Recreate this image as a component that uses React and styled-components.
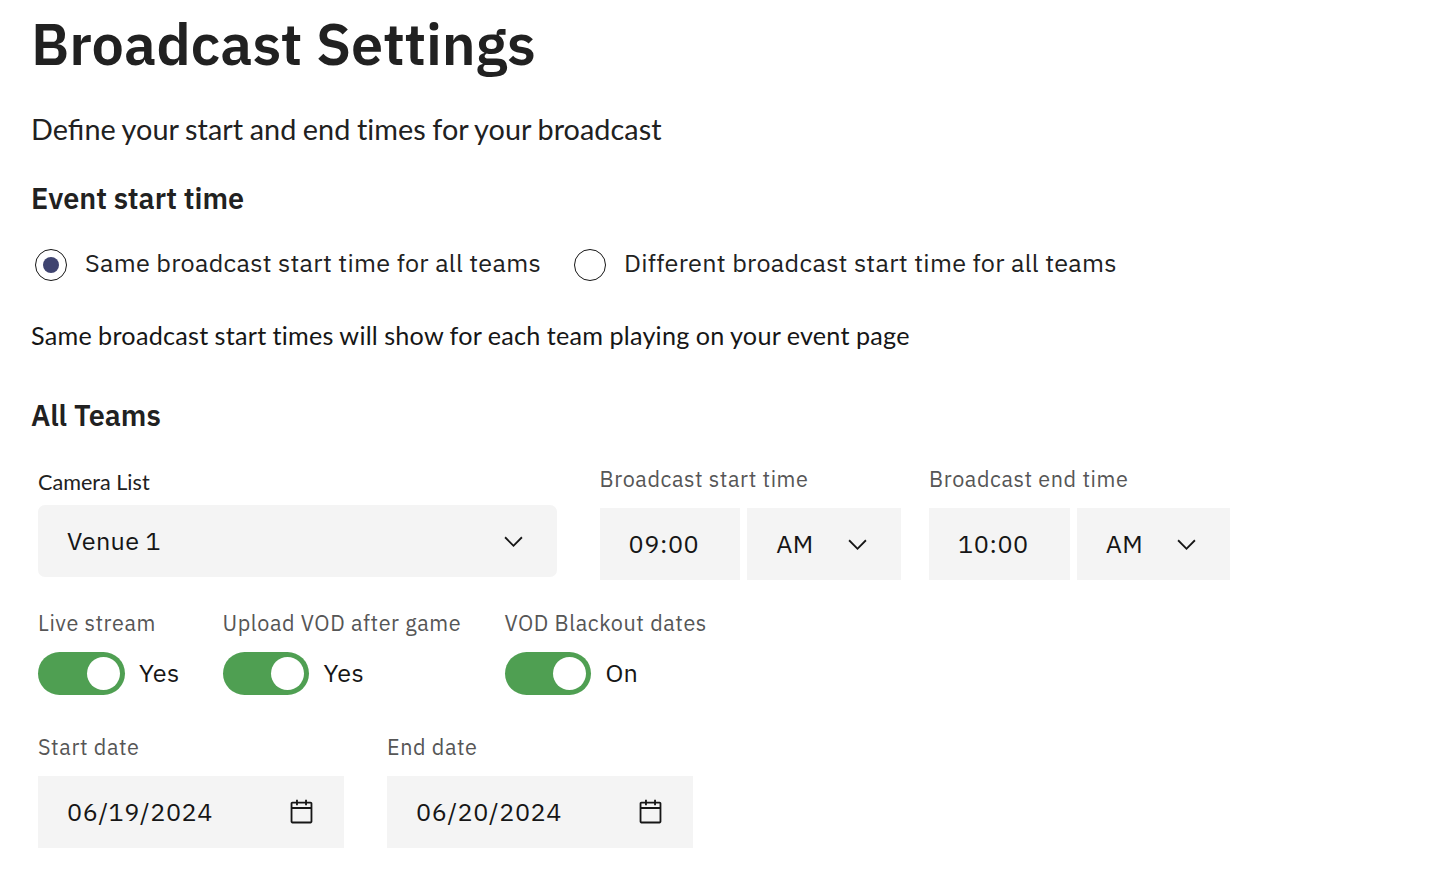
import React from "react";
import styled, { createGlobalStyle } from "styled-components";

const GlobalStyle = createGlobalStyle`
  *, *::before, *::after { box-sizing: border-box; }
  body { margin: 0; background: #fff; color: #161616; }
`;

const sans = `"IBM Plex Sans", Roboto, "Liberation Sans", sans-serif`;
const lato = `Lato, "Open Sans", sans-serif`;

const Page = styled.main`
  display: flex;
  flex-direction: column;
  padding: 8px 31px 30px;
  min-height: 878px;
  background: #fff;
  font-family: ${sans};
  white-space: nowrap;
`;

const Title = styled.h1`
  margin: 0;
  font-size: 57.6px;
  font-weight: 600;
  line-height: 72px;
  color: #212121;
`;

const Intro = styled.p`
  margin: 27px 0 0;
  font-family: ${lato};
  font-size: 28.8px;
  line-height: 44px;
  letter-spacing: 0.05px;
  word-spacing: -0.9px;
  color: #212121;
`;

const Ligated = styled.span`
  font-feature-settings: "liga" 1;
`;

const SectionTitle = styled.h2`
  margin: ${(p) => p.$gap}px 0 0;
  padding-bottom: 1px;
  font-size: 28.8px;
  font-weight: 600;
  line-height: 36px;
  color: #212121;
`;

const RadioGroup = styled.div`
  display: flex;
  margin: 30px 0 0 4px;
`;

const RadioOption = styled.label`
  display: flex;
  align-items: center;
  flex: none;
  width: 539px;
  height: 36px;
`;

const RadioDot = styled.span`
  display: flex;
  align-items: center;
  justify-content: center;
  flex: none;
  width: 32px;
  height: 32px;
  border: 1.5px solid #161616;
  border-radius: 50%;
  &::after {
    content: "";
    width: 16px;
    height: 16px;
    border-radius: 50%;
    background: ${(p) => (p.$checked ? "#3f4470" : "transparent")};
  }
`;

const RadioText = styled.span`
  padding: 0 0 4px 18px;
  font-size: 25.2px;
  line-height: 32px;
  letter-spacing: 0.288px;
  color: #212121;
`;

const Hint = styled.p`
  margin: 34px 0 0;
  font-family: ${lato};
  font-size: 25.2px;
  line-height: 36px;
  letter-spacing: 0.24px;
  word-spacing: -0.55px;
  color: #161616;
`;

const Row = styled.div`
  display: flex;
  align-items: flex-start;
  margin: ${(p) => p.$gap}px 0 0 7px;
`;

const Field = styled.div`
  display: flex;
  flex-direction: column;
  flex: none;
  width: ${(p) => p.$w}px;
  margin-right: ${(p) => p.$mr || 0}px;
`;

const Label = styled.label`
  margin-bottom: 14px;
  font-size: 21.6px;
  line-height: 30px;
  letter-spacing: 0.576px;
  color: #565656;
`;

const CameraLabel = styled.label`
  margin: 3px 0 8px;
  font-family: ${lato};
  font-size: 21.6px;
  line-height: 30px;
  color: #212121;
`;

const Control = styled.div`
  display: flex;
  align-items: center;
  justify-content: space-between;
  width: ${(p) => p.$w}px;
  height: 72px;
  padding: 0 ${(p) => p.$pr || 29}px 0 29px;
  border-radius: ${(p) => p.$radius || 0}px;
  background: #f4f4f4;
`;

const Value = styled.span`
  font-size: 25.2px;
  line-height: 36px;
  letter-spacing: ${(p) => p.$track || 0.288}px;
  color: #161616;
`;

const TimeControls = styled.div`
  display: flex;
  justify-content: space-between;
`;

const ToggleLine = styled.div`
  display: flex;
  align-items: flex-start;
  gap: 14.4px;
  height: 43px;
  ${Value} { padding-top: 3px; }
`;

const Switch = styled.span`
  display: flex;
  align-items: center;
  justify-content: flex-end;
  width: 86.5px;
  height: 43px;
  padding: 0 5px;
  border-radius: 22px;
  background: #4f9f52;
  &::after {
    content: "";
    width: 33px;
    height: 33px;
    border-radius: 50%;
    background: #fff;
  }
`;

const Icon = styled.svg`
  display: block;
  flex: none;
`;

const Chevron = () => (
  <Icon width="29" height="29" viewBox="0 0 16 16" fill="#161616">
    <path d="M8 11L3 6 3.7 5.3 8 9.6 12.3 5.3 13 6z" />
  </Icon>
);

const Calendar = () => (
  <Icon width="29" height="29" viewBox="0 0 32 32" fill="#161616">
    <path d="M26 4h-4V2h-2v2h-8V2h-2v2H6C4.9 4 4 4.9 4 6v20c0 1.1.9 2 2 2h20c1.1 0 2-.9 2-2V6c0-1.1-.9-2-2-2zm0 22H6V12h20v14zm0-16H6V6h4v2h2V6h8v2h2V6h4v4z" />
  </Icon>
);

const TimeField = ({ label, time }) => (
  <Field $w={301} $mr={28.5}>
    <Label>{label}</Label>
    <TimeControls>
      <Control $w={140.6}>
        <Value $track={0.576}>{time}</Value>
      </Control>
      <Control $w={153.4}>
        <Value>AM</Value>
        <Chevron />
      </Control>
    </TimeControls>
  </Field>
);

const ToggleField = ({ label, state, width }) => (
  <Field $w={width}>
    <Label>{label}</Label>
    <ToggleLine>
      <Switch />
      <Value>{state}</Value>
    </ToggleLine>
  </Field>
);

const DateField = ({ label, date }) => (
  <Field $w={306} $mr={43}>
    <Label>{label}</Label>
    <Control $w={306} $pr={28}>
      <Value $track={0.576}>{date}</Value>
      <Calendar />
    </Control>
  </Field>
);

export default function App() {
  return (
    <>
      <GlobalStyle />
      <Page>
        <Title>Broadcast Settings</Title>
        <Intro>
          <Ligated>Define</Ligated> your start and end times for your broadcast
        </Intro>
        <SectionTitle $gap={29}>Event start time</SectionTitle>
        <RadioGroup>
          <RadioOption>
            <RadioDot $checked />
            <RadioText>Same broadcast start time for all teams</RadioText>
          </RadioOption>
          <RadioOption>
            <RadioDot />
            <RadioText>Different broadcast start time for all teams</RadioText>
          </RadioOption>
        </RadioGroup>
        <Hint>Same broadcast start times will show for each team playing on your event page</Hint>
        <SectionTitle $gap={44}>All Teams</SectionTitle>
        <Row $gap={30}>
          <Field $w={519} $mr={42.6}>
            <CameraLabel>Camera List</CameraLabel>
            <Control $w={519} $radius={7}>
              <Value>Venue 1</Value>
              <Chevron />
            </Control>
          </Field>
          <TimeField label="Broadcast start time" time="09:00" />
          <TimeField label="Broadcast end time" time="10:00" />
        </Row>
        <Row $gap={28}>
          <ToggleField label="Live stream" state="Yes" width={184.5} />
          <ToggleField label="Upload VOD after game" state="Yes" width={282} />
          <ToggleField label="VOD Blackout dates" state="On" width={220} />
        </Row>
        <Row $gap={37}>
          <DateField label="Start date" date="06/19/2024" />
          <DateField label="End date" date="06/20/2024" />
        </Row>
      </Page>
    </>
  );
}
